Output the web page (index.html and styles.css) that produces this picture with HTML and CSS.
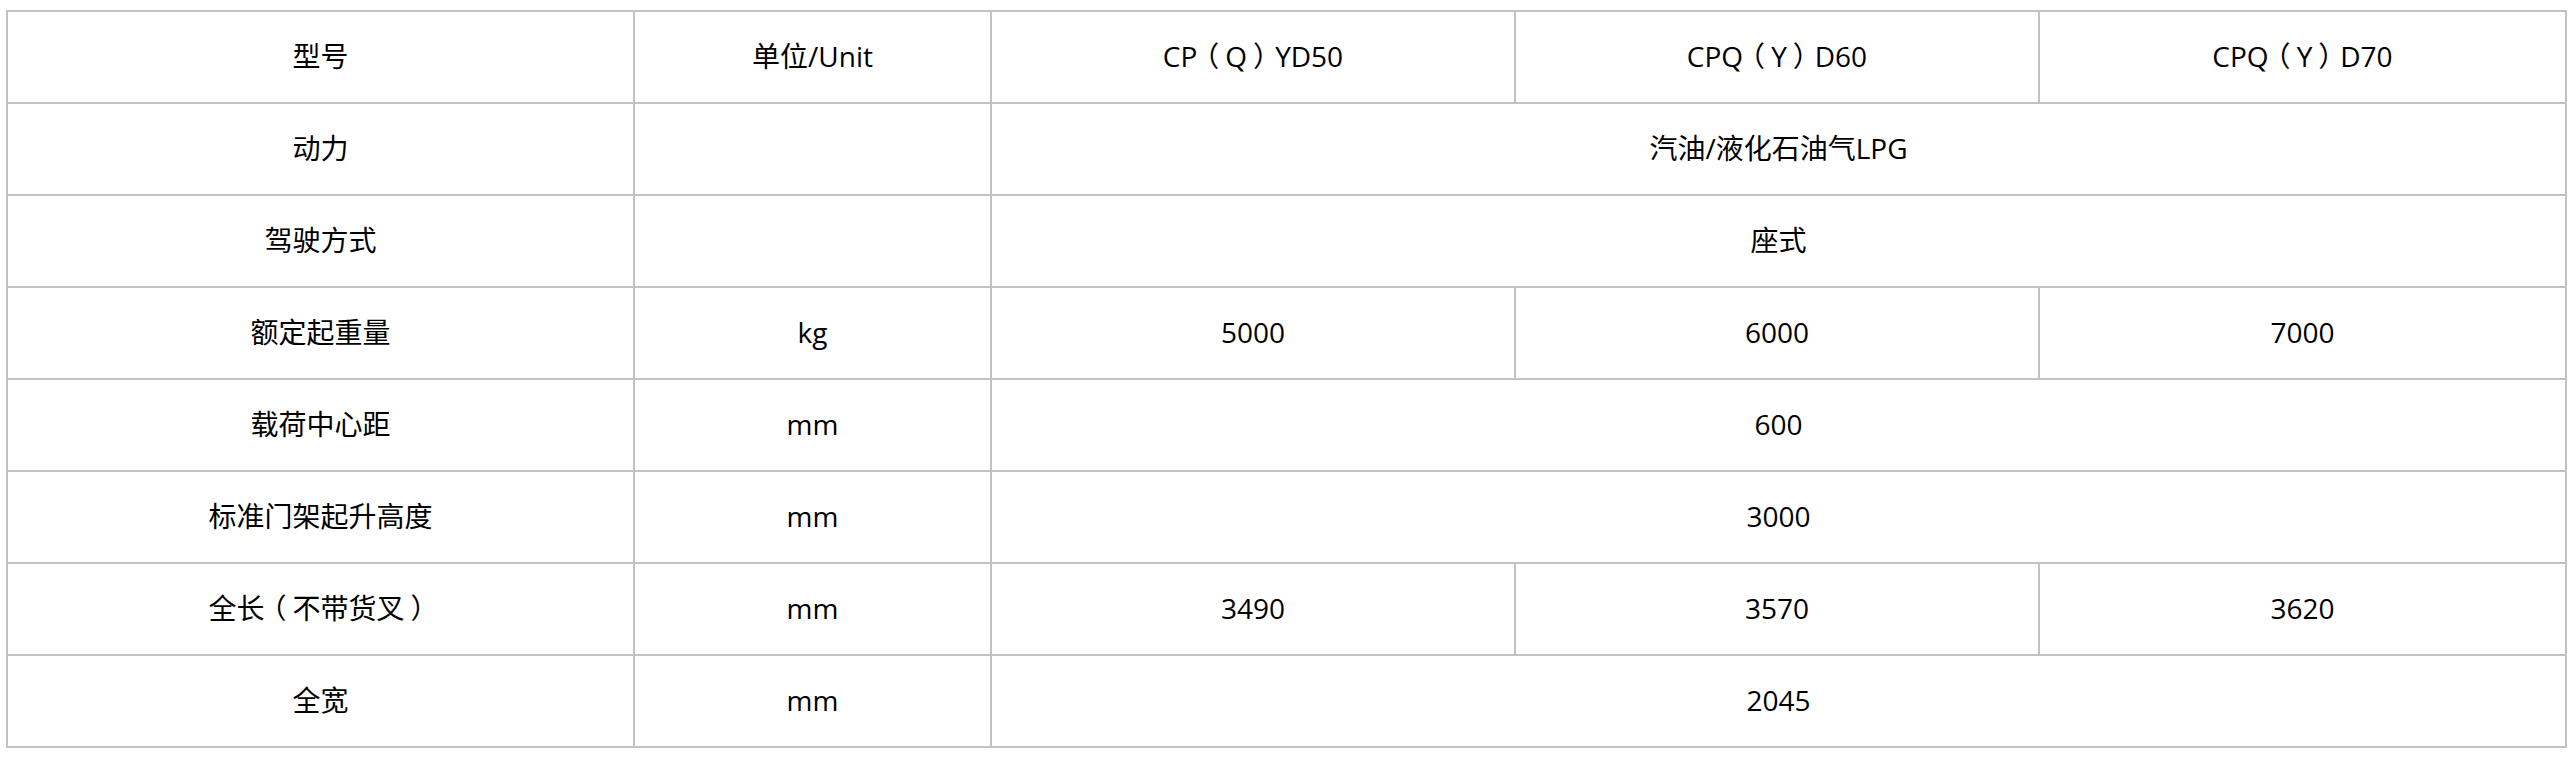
FILE: index.html
```html
<!DOCTYPE html>
<html lang="zh-CN">
<head>
<meta charset="utf-8">
<title>参数</title>
<link rel="stylesheet" href="styles.css">
</head>
<body>
<table class="spec">
  <colgroup>
    <col class="c-name">
    <col class="c-unit">
    <col class="c-model">
    <col class="c-model">
    <col class="c-last">
  </colgroup>
  <tbody>
    <tr><td>型号</td><td>单位/Unit</td><td>CP<span class="fw">（</span>Q<span class="fw">）</span>YD50</td><td>CPQ<span class="fw">（</span>Y<span class="fw">）</span>D60</td><td>CPQ<span class="fw">（</span>Y<span class="fw">）</span>D70</td></tr>
    <tr><td>动力</td><td></td><td colspan="3">汽油/液化石油气LPG</td></tr>
    <tr><td>驾驶方式</td><td></td><td colspan="3">座式</td></tr>
    <tr><td>额定起重量</td><td>kg</td><td>5000</td><td>6000</td><td>7000</td></tr>
    <tr><td>载荷中心距</td><td>mm</td><td colspan="3">600</td></tr>
    <tr><td>标准门架起升高度</td><td>mm</td><td colspan="3">3000</td></tr>
    <tr><td>全长<span class="fw">（</span>不带货叉<span class="fw">）</span></td><td>mm</td><td>3490</td><td>3570</td><td>3620</td></tr>
    <tr><td>全宽</td><td>mm</td><td colspan="3">2045</td></tr>
  </tbody>
</table>
</body>
</html>
```
FILE: styles.css
```css
html, body {
  margin: 0;
  padding: 0;
  background: #fff;
}
body {
  padding: 10px 9px 0 6px;
  font-family: "Open Sans", "Noto Sans CJK SC", sans-serif;
  font-size: 28px;
  color: #000;
}
.spec {
  width: 2559px;
  border-collapse: collapse;
  table-layout: fixed;
  border: 2px solid #c2c2c2;
}
.c-name { width: 627px; }
.c-unit { width: 357px; }
.c-model { width: 524px; }
.c-last { width: 527px; }
.spec td {
  border: 2px solid #c2c2c2;
  height: 90px;
  padding: 0;
  text-align: center;
  vertical-align: middle;
  line-height: 1.2;
}
.fw {
  display: inline-block;
  width: 1em;
  text-align: center;
  font-feature-settings: "palt";
}
```
